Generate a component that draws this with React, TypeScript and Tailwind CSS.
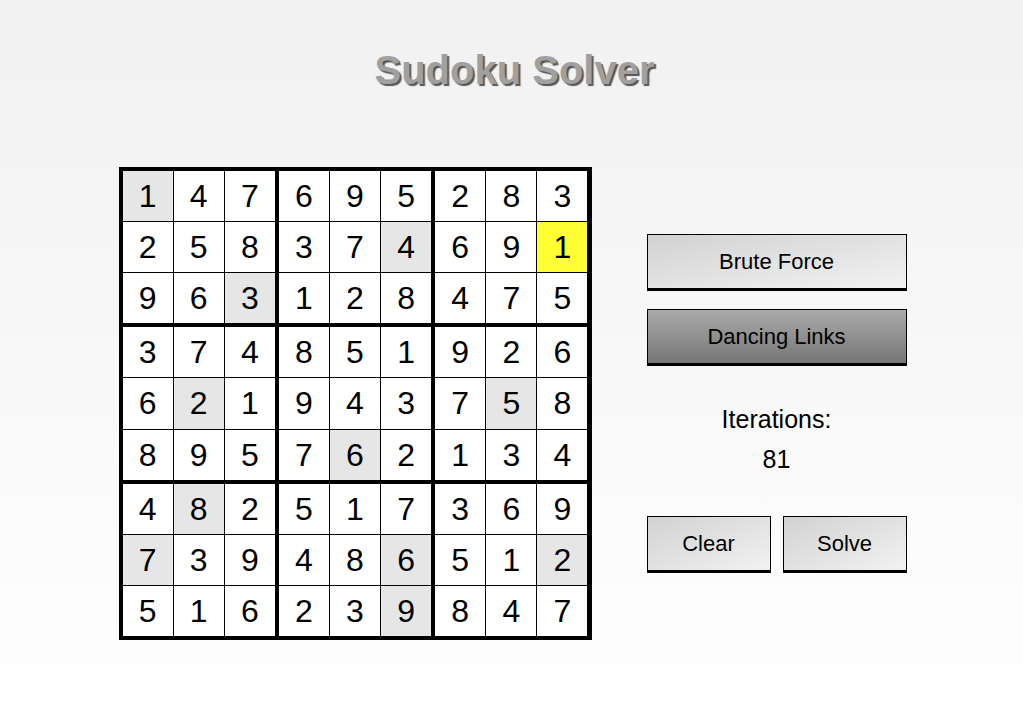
import React from "react";

const rows = [
  "147695283",
  "258374691",
  "963128475",
  "374851926",
  "621943758",
  "895762134",
  "482517369",
  "739486512",
  "516239847",
];

const gray = new Set(["0-0", "1-5", "2-2", "4-1", "4-7", "5-4", "6-1", "7-0", "7-5", "7-8", "8-5"]);
const yellow = new Set(["1-8"]);

function Cell({ r, c }: { r: number; c: number }) {
  const key = `${r}-${c}`;
  const bg = yellow.has(key) ? "bg-[#ffff33]" : gray.has(key) ? "bg-[#e6e6e6]" : "bg-white";
  return (
    <div className={`${bg} flex items-center justify-center text-[32px] leading-none text-black`}>
      {rows[r][c]}
    </div>
  );
}

function Box({ br, bc }: { br: number; bc: number }) {
  const cells = [];
  for (let i = 0; i < 3; i++) {
    for (let j = 0; j < 3; j++) {
      cells.push(<Cell key={`${i}-${j}`} r={br * 3 + i} c={bc * 3 + j} />);
    }
  }
  return <div className="grid grid-cols-3 grid-rows-3 gap-px bg-black">{cells}</div>;
}

export default function App() {
  const boxes = [];
  for (let i = 0; i < 3; i++) for (let j = 0; j < 3; j++) boxes.push(<Box key={`${i}-${j}`} br={i} bc={j} />);

  const btnLight =
    "flex items-center justify-center border border-black border-b-[3px] bg-linear-to-br from-[#d2d2d2] to-[#f2f2f2] text-[22px] text-black h-[57px]";

  return (
    <div
      className="min-h-screen w-full bg-linear-to-b from-[#f1f1f1] to-white"
      style={{ fontFamily: '"Liberation Sans", Arial, sans-serif' }}
    >
      <h1 className="pt-[47px] pl-[6px] text-center text-[40px] font-bold leading-[46px] text-[#a0a0a0] [text-shadow:2px_2px_1px_#555]">
        Sudoku Solver
      </h1>
      <div className="mt-[74px] flex items-center justify-center gap-[55px] pl-[2px]">
        <div className="grid h-[473px] w-[473px] grid-cols-3 grid-rows-3 gap-[4px] border-4 border-black bg-black">
          {boxes}
        </div>
        <div className="flex w-[260px] flex-col">
          <button className={btnLight}>Brute Force</button>
          <button className="mt-[18px] flex h-[57px] items-center justify-center border border-b-[3px] border-black bg-linear-to-b from-[#aaaaaa] to-[#777777] text-[22px] text-black">
            Dancing Links
          </button>
          <div className="mt-[33px] text-center text-[25px] leading-[40px] text-black">
            <div>Iterations:</div>
            <div>81</div>
          </div>
          <div className="mt-[37px] flex gap-[12px]">
            <button className={`${btnLight} w-[124px]`}>Clear</button>
            <button className={`${btnLight} w-[124px]`}>Solve</button>
          </div>
        </div>
      </div>
    </div>
  );
}
